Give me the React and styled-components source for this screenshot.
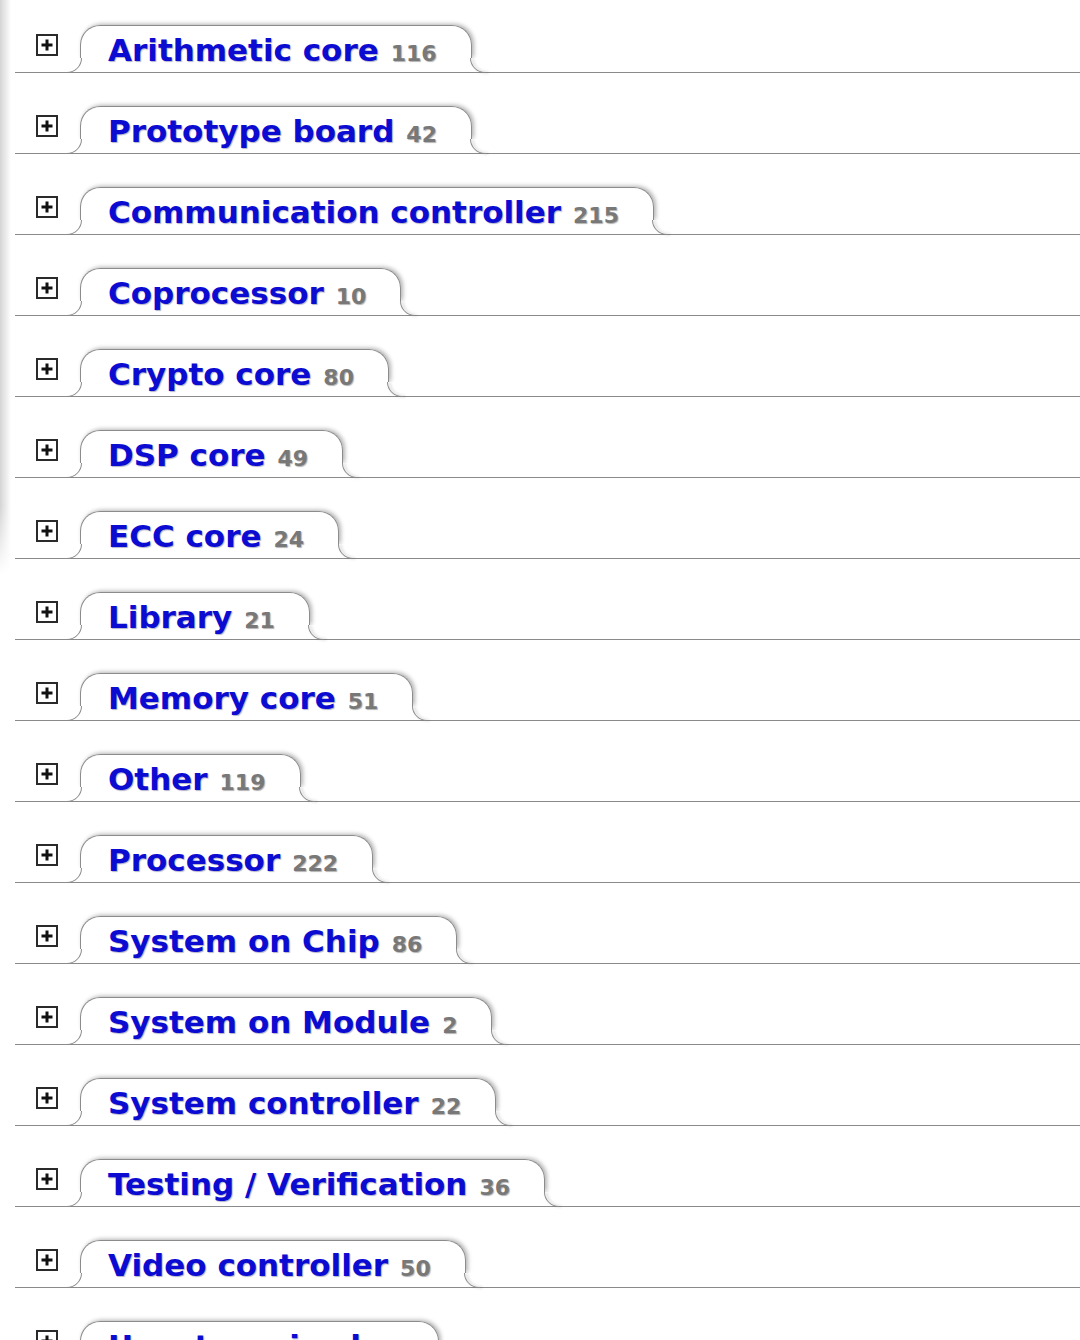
import styled, { createGlobalStyle } from "styled-components";

const GlobalStyle = createGlobalStyle`
  html, body {
    margin: 0;
    padding: 0;
    background: #fff;
    overflow: hidden;
  }
  body {
    font-family: "DejaVu Sans", Verdana, sans-serif;
  }
`;

const Page = styled.div`
  position: relative;
  width: 1080px;
  height: 1340px;
  overflow: hidden;

  /* grey edge of the scrolled panel on the left */
  &::before {
    content: "";
    position: absolute;
    left: 0;
    top: 0;
    width: 11px;
    height: 575px;
    background: linear-gradient(to right, rgba(0, 0, 0, 0.17), rgba(0, 0, 0, 0));
    -webkit-mask-image: linear-gradient(to bottom, #000 88%, transparent);
    mask-image: linear-gradient(to bottom, #000 88%, transparent);
  }
`;

const List = styled.ul`
  list-style: none;
  margin: -8px 0 0 15px;
  padding: 0;
`;

const Row = styled.li`
  display: flex;
  align-items: flex-end;
  height: 81px;
  box-sizing: border-box;
  padding-top: 32px;
  border-bottom: 1px solid #8a8a8a;
`;

const Toggle = styled.span`
  align-self: flex-start;
  margin-top: 10px;
  margin-left: 21px;
  width: 22px;
  height: 22px;
  box-sizing: border-box;
  border: 2px solid #2a2a2a;
  display: flex;
  align-items: center;
  justify-content: center;
  background: #fff;

  svg {
    display: block;
  }
`;

const Tab = styled.a`
  position: relative;
  margin-left: 22px;
  height: 47px;
  box-sizing: border-box;
  display: flex;
  align-items: baseline;
  gap: 12px;
  padding: 7px 35px 0 28px;
  text-decoration: none;
  white-space: nowrap;

  /* rounded top of the tab, the flares draw its feet */
  &::before {
    content: "";
    position: absolute;
    top: 0;
    left: 0;
    right: 0;
    bottom: 14px;
    border: 1.5px solid #8c8c8c;
    border-bottom: none;
    border-radius: 20px 20px 0 0;
    box-shadow: 2px -1px 4px rgba(0, 0, 0, 0.3);
    clip-path: inset(-8px -8px 0 -8px);
    pointer-events: none;
  }
`;

const Flare = styled.span`
  position: absolute;
  bottom: -1px;
  width: 15.5px;
  height: 15px;
  box-sizing: border-box;
  border-bottom: 1px solid #8a8a8a;
  ${({ $side }) =>
    $side === "left"
      ? `
    left: -14px;
    border-right: 1.5px solid #8c8c8c;
    border-bottom-right-radius: 15px;
  `
      : `
    right: -14px;
    border-left: 1.5px solid #8c8c8c;
    border-bottom-left-radius: 15px;
    filter: drop-shadow(2px 0 1.5px rgba(0, 0, 0, 0.3));
  `}
`;

const Name = styled.span`
  font-family: "DejaVu Sans", Verdana, sans-serif;
  font-weight: 700;
  font-size: 31px;
  line-height: 36px;
  color: #0b0bd2;
  text-shadow: 1px 1px 1px rgba(0, 0, 80, 0.3);
`;

const Count = styled.span`
  font-family: "DejaVu Sans", Verdana, sans-serif;
  font-weight: 700;
  font-size: 22px;
  color: #787878;
  text-shadow: 1px 1px 1px rgba(0, 0, 0, 0.3);
`;

const categories = [
  ["Arithmetic core", 116],
  ["Prototype board", 42],
  ["Communication controller", 215],
  ["Coprocessor", 10],
  ["Crypto core", 80],
  ["DSP core", 49],
  ["ECC core", 24],
  ["Library", 21],
  ["Memory core", 51],
  ["Other", 119],
  ["Processor", 222],
  ["System on Chip", 86],
  ["System on Module", 2],
  ["System controller", 22],
  ["Testing / Verification", 36],
  ["Video controller", 50],
  ["Uncategorized", 14],
];

function PlusIcon() {
  return (
    <svg width="14" height="14" viewBox="0 0 14 14">
      <path d="M7 1.5v11M1.5 7h11" stroke="#111" strokeWidth="3" />
    </svg>
  );
}

export default function App() {
  return (
    <Page>
      <GlobalStyle />
      <List>
        {categories.map(([name, count]) => (
          <Row key={name}>
            <Toggle>
              <PlusIcon />
            </Toggle>
            <Tab href="#">
              <Flare $side="left" />
              <Name>{name}</Name>
              <Count>{count}</Count>
              <Flare $side="right" />
            </Tab>
          </Row>
        ))}
      </List>
    </Page>
  );
}
